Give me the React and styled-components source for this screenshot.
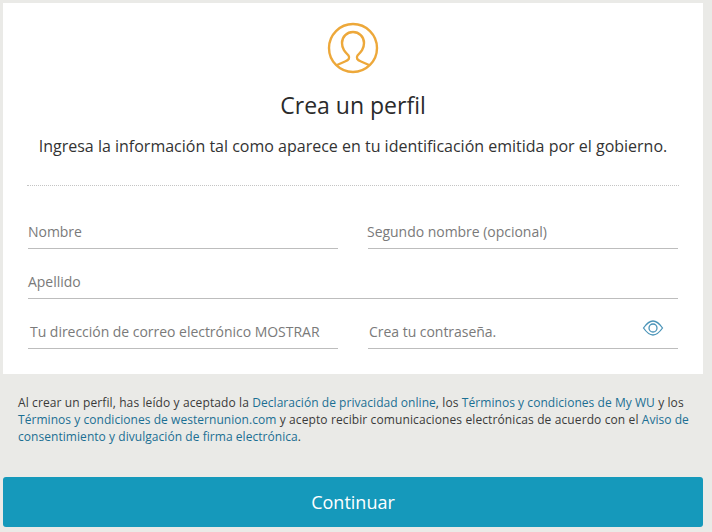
import React from 'react'
import styled, { createGlobalStyle } from 'styled-components'

const GlobalStyle = createGlobalStyle`
  html, body {
    margin: 0;
    padding: 0;
    background: #eaeae7;
    font-family: 'Open Sans', 'Liberation Sans', sans-serif;
  }
`

const Page = styled.div`
  width: 712px;
  height: 532px;
  overflow: hidden;
  box-sizing: border-box;
  padding: 3px 9px 0 3px;
`

const Card = styled.section`
  height: 371px;
  box-sizing: border-box;
  background: #fff;
  padding-top: 19px;
  display: flex;
  flex-direction: column;
  align-items: center;
`

const Title = styled.h1`
  margin: 16px 0 0;
  font-size: 23px;
  line-height: 30px;
  font-weight: 400;
  color: #2b2b2b;
`

const Subtitle = styled.p`
  margin: 14px 0 0;
  font-size: 16px;
  line-height: 24px;
  color: #333;
`

const Divider = styled.hr`
  width: 652px;
  margin: 27px 0 0;
  border: 0;
  border-top: 1px dotted #c4c4c4;
`

const Form = styled.div`
  width: 650px;
  margin-top: 13px;
  display: grid;
  grid-template-columns: 310px 310px;
  column-gap: 30px;
`

const Field = styled.div`
  grid-column: ${p => (p.$wide ? '1 / -1' : 'auto')};
  height: 50px;
  box-sizing: border-box;
  padding-top: 23px;
  border-bottom: 1px solid #bdbdbd;
  display: flex;
  justify-content: space-between;
`

const Label = styled.span`
  margin-left: ${p => p.$offset || 0}px;
  font-size: 14px;
  letter-spacing: -0.03px;
  line-height: 20px;
  color: #7a7a7a;
  white-space: nowrap;
`

const EyeIcon = styled.svg`
  width: 22px;
  height: 16px;
  margin: -2px 14px 0 0;
  fill: none;
  stroke: #4b94b8;
  stroke-width: 1.3;
`

const Legal = styled.p`
  margin: 20px 0 0 15px;
  width: 675px;
  font-size: 12px;
  letter-spacing: 0.11px;
  line-height: 17px;
  color: #3a3a3a;
`

const LegalLink = styled.a`
  color: #1b6f93;
  letter-spacing: 0.05px;
  text-decoration: none;
`

const Button = styled.button`
  display: block;
  width: 700px;
  height: 50px;
  margin-top: 32px;
  border: 0;
  border-radius: 3px;
  background: #1599bb;
  color: #fff;
  font-family: inherit;
  font-size: 18px;
`

const PersonIcon = () => (
  <svg width="52" height="52" viewBox="0 0 52 52" fill="none" stroke="#eda83a" strokeWidth="2.4">
    <circle cx="26" cy="26" r="24" />
    <path d="M10 43 L18 39.500 C22 38 23 36 21.500 33.500 C18 30 15 27 15 21 C15 14.500 20 10 26 10 C32 10 37 14.500 37 21 C37 27 34 30 30.500 33.500 C29 36 30 38 34 39.500 L42 43" />
  </svg>
)

export default function App() {
  return (
    <>
      <GlobalStyle />
      <Page>
        <Card>
          <PersonIcon />
          <Title>Crea un perfil</Title>
          <Subtitle>Ingresa la información tal como aparece en tu identificación emitida por el gobierno.</Subtitle>
          <Divider />
          <Form>
            <Field><Label>Nombre</Label></Field>
            <Field><Label $offset={-1}>Segundo nombre (opcional)</Label></Field>
            <Field $wide><Label>Apellido</Label></Field>
            <Field><Label $offset={2}>Tu dirección de correo electrónico MOSTRAR</Label></Field>
            <Field>
              <Label $offset={1}>Crea tu contraseña.</Label>
              <EyeIcon viewBox="0 0 22 16">
                <path d="M1.500 8 C5 3 8 1 11 1 C14 1 17 3 20.500 8 C17 13 14 15 11 15 C8 15 5 13 1.500 8 Z" />
                <circle cx="11" cy="8" r="4" />
              </EyeIcon>
            </Field>
          </Form>
        </Card>
        <Legal>
          Al crear un perfil, has leído y aceptado la <LegalLink>Declaración de privacidad online</LegalLink>, los{' '}
          <LegalLink>Términos y condiciones de My WU</LegalLink> y los <LegalLink>Términos y condiciones de westernunion.com</LegalLink> y acepto recibir comunicaciones electrónicas de acuerdo con el{' '}
          <LegalLink>Aviso de consentimiento y divulgación de firma electrónica</LegalLink>.
        </Legal>
        <Button>Continuar</Button>
      </Page>
    </>
  )
}
